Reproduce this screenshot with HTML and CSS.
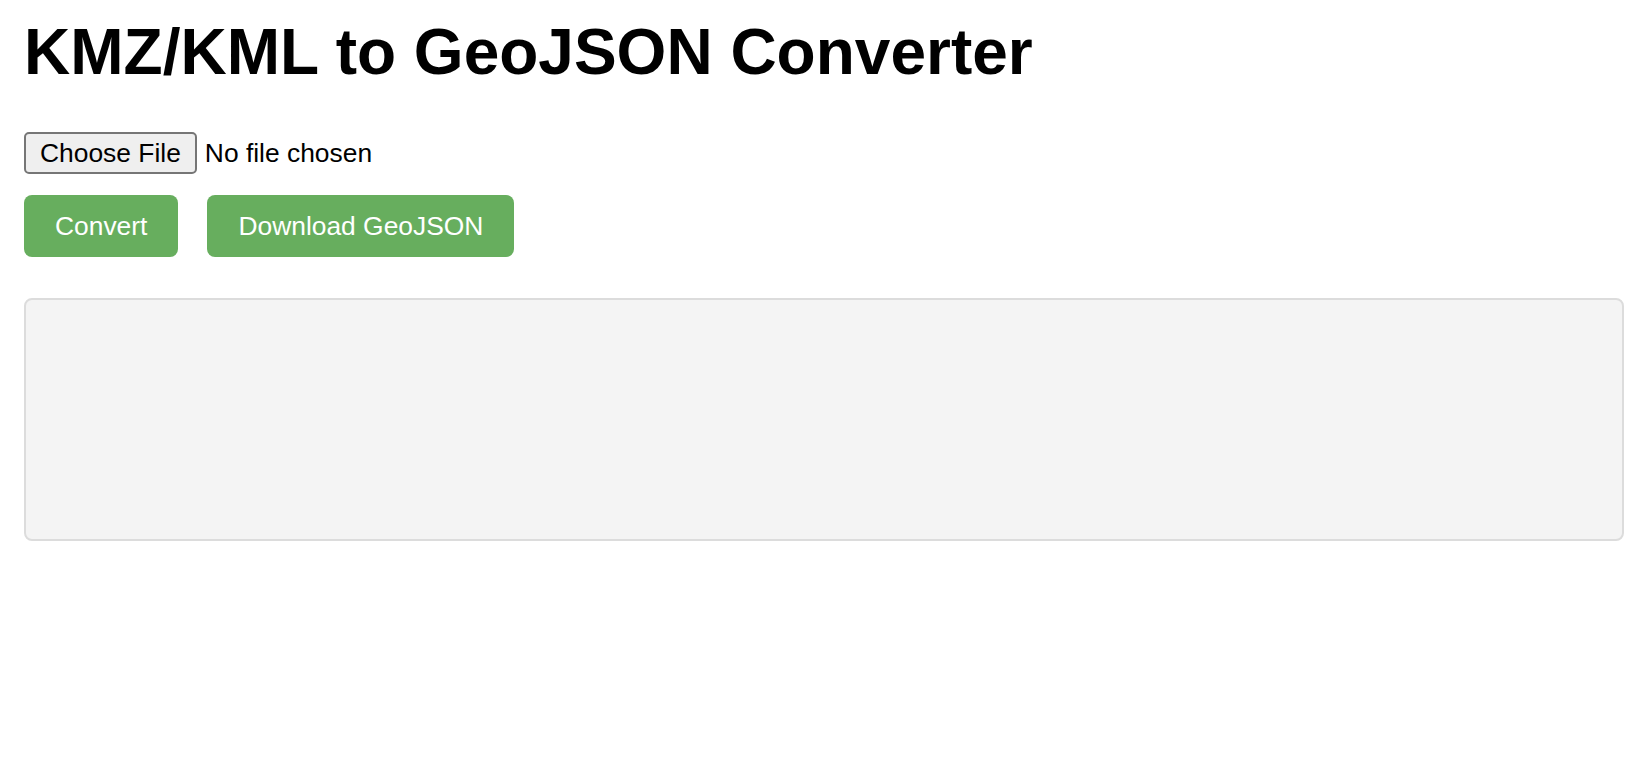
FILE: index.html
```html
<!DOCTYPE html>
<html lang="en">
<head>
<meta charset="utf-8">
<title>KMZ/KML to GeoJSON Converter</title>
<link rel="stylesheet" href="styles.css">
</head>
<body>
<main class="page">
  <h1 class="title">KMZ/KML to GeoJSON Converter</h1>
  <div class="file-row">
    <input class="file-input" type="file" accept=".kmz,.kml">
  </div>
  <div class="actions">
    <button class="btn" type="button">Convert</button>
    <button class="btn" type="button">Download GeoJSON</button>
  </div>
  <pre class="output"></pre>
</main>
</body>
</html>
```
FILE: styles.css
```css
html, body {
  margin: 0;
  padding: 0;
  background: #ffffff;
}
body {
  font-family: "Liberation Sans", Arial, Helvetica, sans-serif;
  color: #000;
}
.page {
  display: flex;
  flex-direction: column;
  padding: 15px 24px 0 24px;
}
.title {
  margin: 0;
  font-size: 64px;
  font-weight: 700;
  line-height: 74px;
  height: 74px;
}
.file-row {
  margin-top: 43px;
  height: 42px;
  display: flex;
  align-items: center;
}
.file-input {
  font-family: "Liberation Sans", Arial, Helvetica, sans-serif;
  font-size: 26.4px;
  color: #000;
  margin: 0;
}
.file-input::file-selector-button {
  font-family: "Liberation Sans", Arial, Helvetica, sans-serif;
  font-size: 26.4px;
  height: 42px;
  padding: 0 14px;
  margin: 0 8px 0 0;
  background: #efefef;
  border: 2px solid #767676;
  border-radius: 5px;
  color: #000;
}
.actions {
  margin-top: 21px;
  display: flex;
  gap: 29px;
}
.btn {
  margin: 0;
  height: 62px;
  padding: 0 31px;
  border: none;
  border-radius: 8px;
  background: #67ae5e;
  color: #ffffff;
  font-family: "Liberation Sans", Arial, Helvetica, sans-serif;
  font-size: 26.4px;
  cursor: pointer;
}
.output {
  margin: 41px 0 0 0;
  height: 243px;
  box-sizing: border-box;
  background: #f4f4f4;
  border: 2px solid #dcdcdc;
  border-radius: 8px;
}
```
